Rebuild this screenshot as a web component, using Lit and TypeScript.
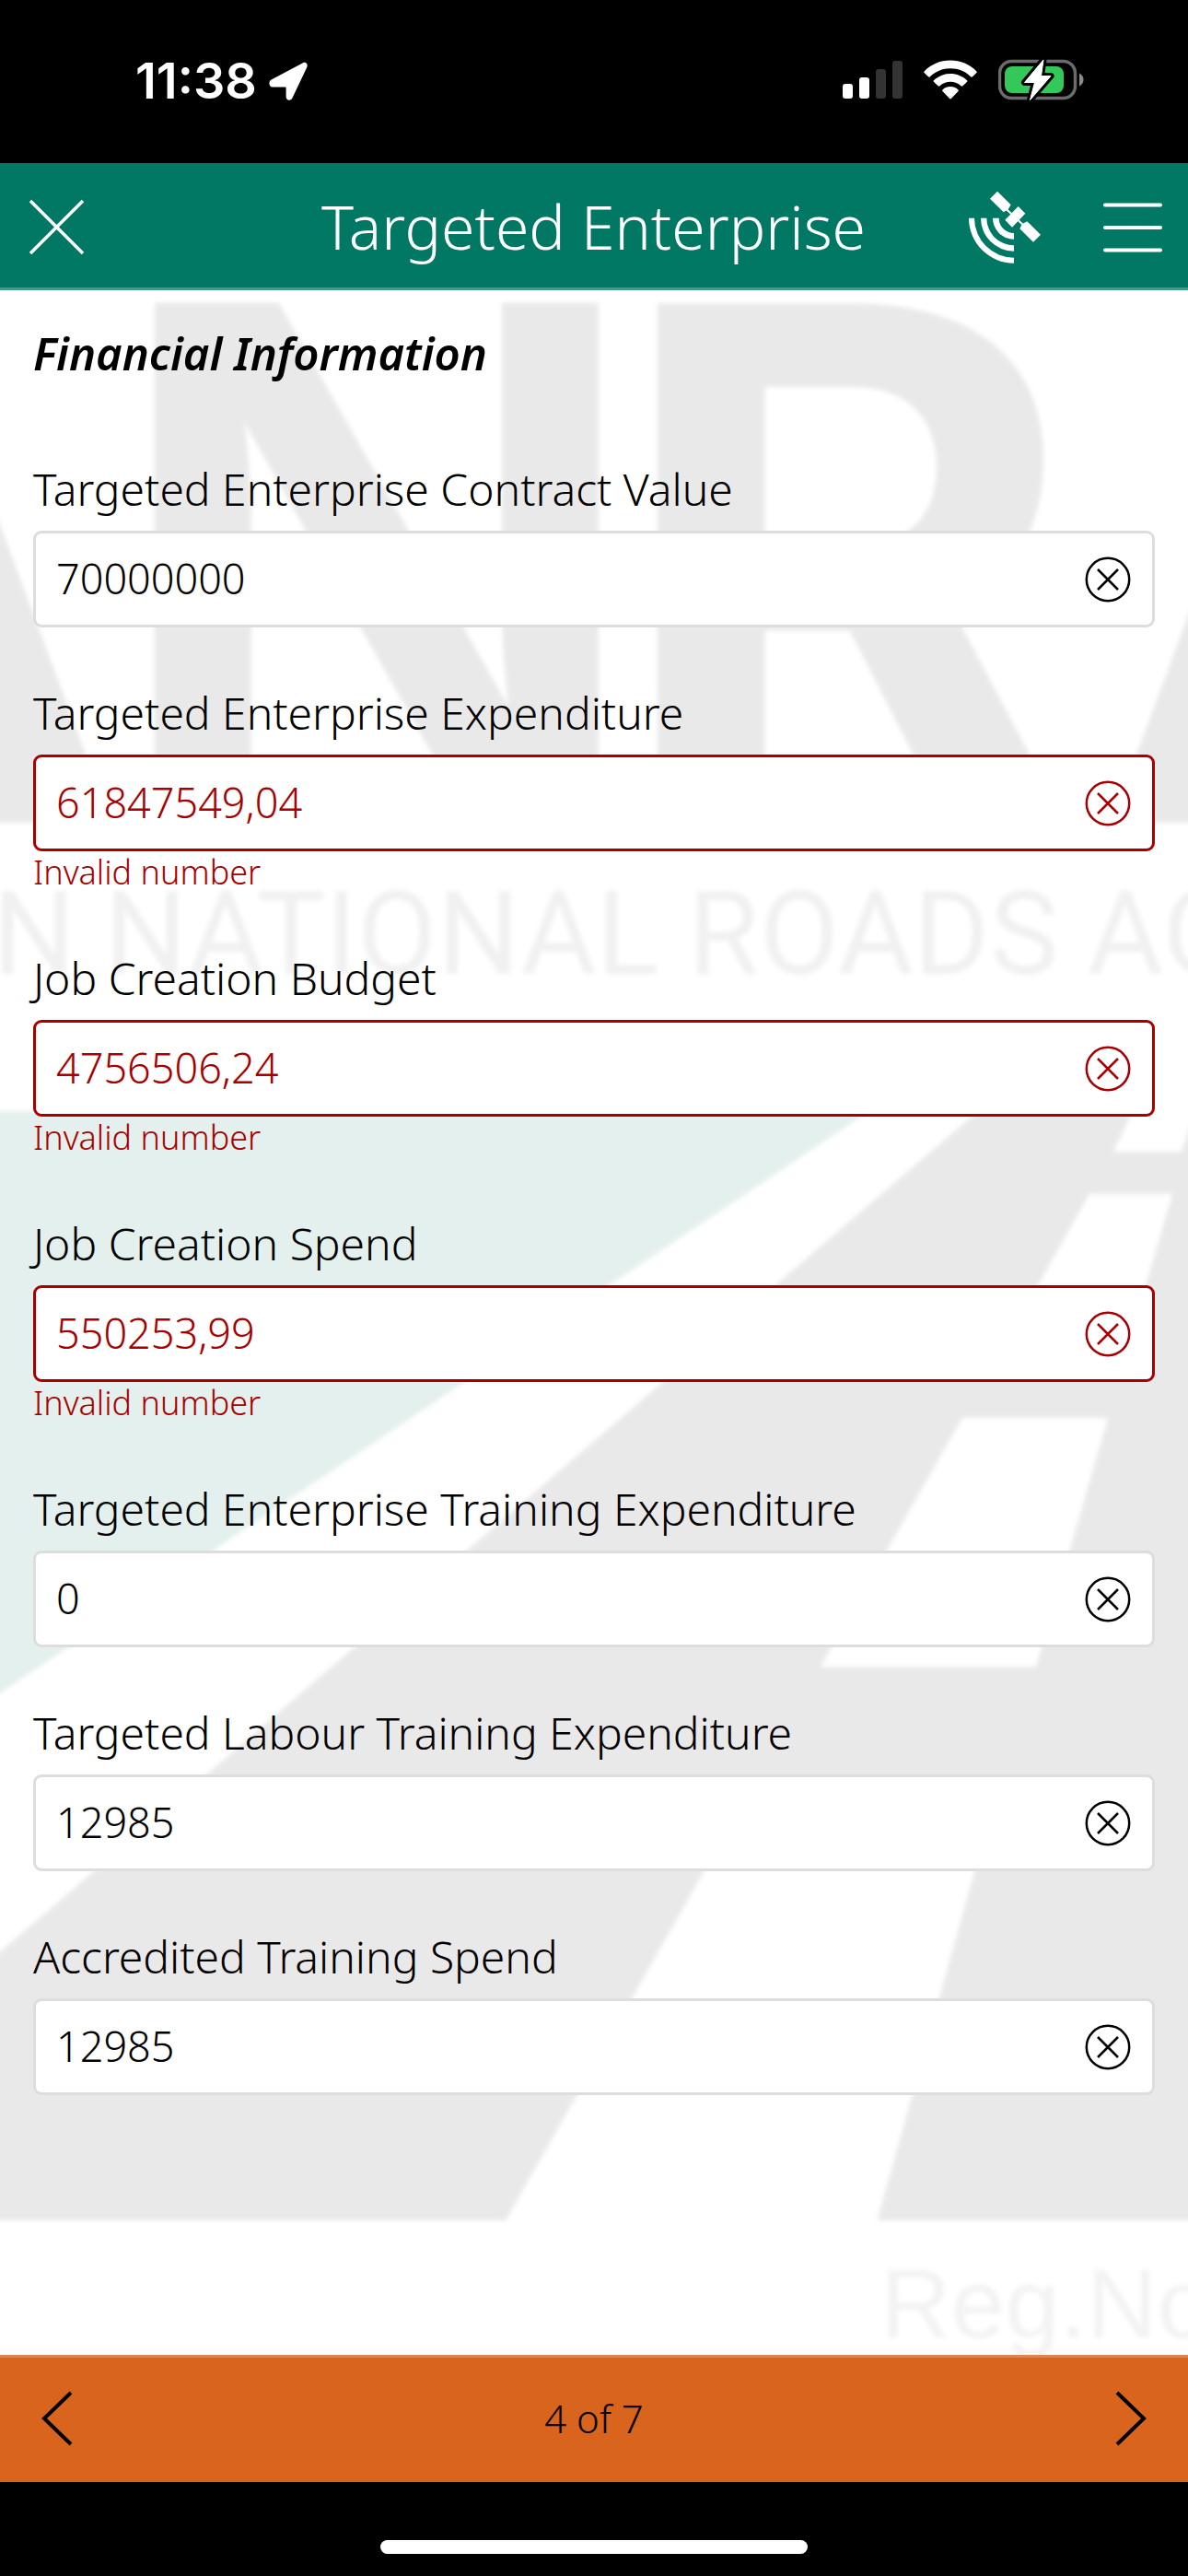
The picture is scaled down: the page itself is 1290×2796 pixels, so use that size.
import { LitElement, html, svg, css, nothing } from "lit";
import { customElement, property, state } from "lit/decorators.js";
import { classMap } from "lit/directives/class-map.js";

interface FieldData {
  id: string;
  label: string;
  value: string;
}

@customElement("status-bar")
class StatusBar extends LitElement {
  static styles = css`
    :host {
      display: block;
      background: #000;
      color: #fff;
    }
    .bar {
      box-sizing: border-box;
      min-height: 177px;
      padding: 0 112px 0 147px;
      display: flex;
      align-items: flex-start;
      justify-content: space-between;
    }
    .group {
      height: 60px;
      margin-top: 57px;
      display: flex;
      align-items: center;
    }
    .clock {
      margin-top: 58px;
      gap: 13px;
      font: 600 54px/60px Inter, "Liberation Sans", sans-serif;
    }
    .system {
      gap: 23px;
    }
    svg {
      display: block;
    }
  `;

  render() {
    return html`
      <div class="bar">
        <div class="group clock">
          <time>11:38</time>
          <svg width="42" height="42" viewBox="0 0 42 42" aria-hidden="true">
            <path fill="#fff" d="M37 1.2 2.6 19.4C-.9 21.4-.1 27.6 4 27.6H17.600c.8 0 1 .4 1 1V38c0 4.300 5.500 5 7 1L41.300 6C42.600 2.500 40.300-.3 37 1.200Z" />
          </svg>
        </div>
        <div class="group system">
          <svg width="65" height="44" viewBox="0 0 65 44" aria-hidden="true">
            <rect x="0" y="26" width="11" height="16" rx="3" fill="#fff" />
            <rect x="18" y="19" width="11" height="23" rx="3" fill="#fff" />
            <rect x="36" y="10" width="11" height="32" rx="3" fill="#333" />
            <rect x="54" y="1" width="11" height="41" rx="3" fill="#333" />
          </svg>
          <svg width="58" height="44" viewBox="0 0 58 44" aria-hidden="true">
            <g fill="#fff">
              <path d="M29 0.500C18 .5 8 4.800.800 12.200c-.7.700-.7 1.400 0 2l4.200 4c.6.600 1.300.6 1.900 0C12.800 12.500 20.500 9.300 29 9.300s16.200 3.200 22.100 8.900c.6.600 1.300.6 1.900 0l4.200-4c.7-.6.7-1.300 0-2C50 4.800 40 .5 29 .5Z" />
              <path d="M29 15c-6.900 0-13.200 2.700-17.900 7-.7.700-.7 1.300 0 2l4.500 4.300c.6.600 1.200.6 1.900 0 3-2.800 7-4.500 11.500-4.500s8.500 1.700 11.500 4.500c.7.600 1.300.6 1.900 0L46.900 24c.7-.7.7-1.300 0-2-4.700-4.300-11-7-17.900-7Z" />
              <path d="M29 29c-3.200 0-6.100 1.200-8.300 3.200-.7.700-.7 1.300 0 2l7.200 7.600c.7.700 1.500.7 2.200 0l7.200-7.600c.7-.7.7-1.300 0-2C35.100 30.200 32.200 29 29 29Z" />
            </g>
          </svg>
          <svg width="94" height="46" viewBox="0 0 94 46" aria-hidden="true">
            <rect x="1.500" y="2.500" width="82" height="40" rx="13" fill="none" stroke="#6b6b6b" stroke-width="3.500" />
            <path d="M88 15.500c6 2.500 6 11.500 0 14Z" fill="#8a8a8a" />
            <rect x="7" y="8" width="64" height="29" rx="8" fill="#34c759" />
            <path
              d="M49 1 28.500 25.500H39.500L34.500 44.500 57 18.500H46.500Z"
              fill="#fff" stroke="#000" stroke-width="7" stroke-linejoin="round" paint-order="stroke"
            />
            <path d="M49 1 28.500 25.500H39.500L34.500 44.500 57 18.500H46.500Z" fill="#fff" stroke="#fff" stroke-width="1" stroke-linejoin="round" />
          </svg>
        </div>
      </div>
    `;
  }
}

@customElement("page-watermark")
class PageWatermark extends LitElement {
  static styles = css`
    :host {
      display: block;
    }
    .art {
      display: block;
      width: 100%;
      height: 100%;
    }
    .wordmark {
      font: 700 793px Roboto, sans-serif;
      fill: #e9e9e9;
    }
    .wordmark.narrow {
      font: 700 820px "Liberation Sans", sans-serif;
    }
    .agency {
      font: 400 126px Roboto, sans-serif;
      fill: #f1f1f1;
    }
    .registration {
      font: 400 106px "Liberation Sans", sans-serif;
      fill: #f3f3f3;
    }
  `;

  render() {
    return html`
      <svg class="art" viewBox="0 315 1290 2241" preserveAspectRatio="xMidYMin slice" aria-hidden="true">
        ${svg`
          <defs>
            <filter id="soft" x="-5%" y="-5%" width="110%" height="110%">
              <feGaussianBlur stdDeviation="2.500" />
            </filter>
          </defs>
          <g filter="url(#soft)">
            <text class="wordmark" x="-410" y="893">A</text>
            <text class="wordmark narrow" x="113" y="893">N</text>
            <text class="wordmark" x="664" y="893">R</text>
            <text class="wordmark" x="1204" y="893">A</text>
            <text class="agency" x="-8" y="1057">N NATIONAL ROADS AG</text>
            <polygon fill="#e4f0ed" points="-20,1206 944,1206 -20,1851" />
            <polygon fill="#e9e9e9" points="1062,1206 1310,1206 1310,2410 -20,2410 -20,2136" />
            <polygon fill="#fff" points="1233,1200 1300,1200 1283,1250 1209,1250" />
            <polygon fill="#fff" points="1183,1296 1273,1296 1228,1450 1096,1450" />
            <polygon fill="#fff" points="1045,1539 1203,1539 1125,1809 891,1809" />
            <polygon fill="#fff" points="805,1960 1078,1960 952,2412 548,2412" />
            <text class="registration" x="956" y="2537">Reg.No</text>
          </g>
        `}
      </svg>
    `;
  }
}

@customElement("number-field")
class NumberField extends LitElement {
  static styles = css`
    :host {
      display: block;
    }
    .label {
      display: block;
      margin-bottom: 15px;
      padding-top: 1px;
      font-size: 48px;
      line-height: 60px;
      color: #000;
    }
    .box {
      box-sizing: border-box;
      height: 105px;
      display: flex;
      align-items: center;
      border: 3px solid #ddd;
      border-radius: 9px;
      background: #fff;
      color: #000;
    }
    .box.invalid {
      border-color: #a80000;
      color: #a80000;
    }
    .input {
      flex: 1;
      min-width: 0;
      box-sizing: border-box;
      height: 100%;
      margin: 0;
      padding: 0 0 3px 22px;
      border: 0;
      outline: 0;
      background: none;
      font: inherit;
      font-size: 45px;
      color: inherit;
    }
    .clear {
      flex: none;
      margin: 0;
      padding: 1px 23px 0;
      height: 100%;
      border: 0;
      background: none;
      color: inherit;
    }
    .clear svg {
      display: block;
    }
    .error {
      margin: 0;
      font-size: 36px;
      line-height: 45px;
      color: #a80000;
    }
  `;

  @property() label = "";
  @property() value = "";

  private get invalid() {
    return !/^\d*(\.\d+)?$/.test(this.value);
  }

  private onInput(e: Event) {
    this.value = (e.target as HTMLInputElement).value;
  }

  private clear() {
    this.value = "";
  }

  render() {
    return html`
      <label class="label" for="value">${this.label}</label>
      <div class=${classMap({ box: true, invalid: this.invalid })}>
        <input
          class="input"
          id="value"
          type="text"
          inputmode="decimal"
          .value=${this.value}
          aria-invalid=${this.invalid ? "true" : "false"}
          @input=${this.onInput}
        />
        <button class="clear" type="button" aria-label="Clear" @click=${this.clear}>
          <svg width="50" height="50" viewBox="0 0 50 50" fill="none" stroke="currentColor" stroke-width="2.500">
            <circle cx="25" cy="25" r="23.200" />
            <path d="M14 14 36 36M36 14 14 36" />
          </svg>
        </button>
      </div>
      ${this.invalid ? html`<p class="error">Invalid number</p>` : nothing}
    `;
  }
}

@customElement("app-root")
class AppRoot extends LitElement {
  static styles = css`
    :host {
      display: flex;
      flex-direction: column;
      min-height: 100vh;
      background: #000;
      font-family: "Noto Sans", "Open Sans", sans-serif;
      font-weight: 300;
      color: #000;
    }
    .header {
      box-sizing: border-box;
      height: 138px;
      padding: 4px 22px 0 21px;
      display: grid;
      grid-template-columns: 1fr auto 1fr;
      align-items: center;
      background: #007863;
      border-bottom: 3px solid #409a8a;
      color: #fff;
    }
    .title {
      margin: 0;
      padding-bottom: 4px;
      font-size: 66px;
      line-height: 80px;
      font-weight: 300;
    }
    .actions {
      display: flex;
      align-items: center;
      justify-content: flex-end;
      gap: 62px;
    }
    .icon {
      margin: 0;
      padding: 0;
      border: 0;
      background: none;
      color: inherit;
    }
    .icon svg {
      display: block;
    }
    .close {
      justify-self: start;
    }
    .main {
      flex: 1;
      position: relative;
      overflow: hidden;
      background: #fff;
    }
    .watermark {
      position: absolute;
      inset: 0;
    }
    .form {
      position: relative;
      padding: 38px 36px 62px;
      display: flex;
      flex-direction: column;
      gap: 62px;
    }
    .heading {
      margin: 0 0 25px;
      font-size: 49px;
      line-height: 60px;
      font-weight: 600;
      font-style: italic;
    }
    .footer {
      box-sizing: border-box;
      height: 138px;
      padding: 0 36px 3px;
      display: flex;
      align-items: center;
      justify-content: space-between;
      background: #d9641e;
      border-top: 3px solid #de8651;
    }
    .page {
      font-size: 42px;
      line-height: 60px;
    }
    .home {
      box-sizing: border-box;
      height: 102px;
      padding-top: 63px;
    }
    .home-bar {
      width: 36%;
      height: 15px;
      margin: 0 auto;
      border-radius: 8px;
      background: #fff;
    }
  `;

  @state() private fields: FieldData[] = [
    { id: "contract", label: "Targeted Enterprise Contract Value", value: "70000000" },
    { id: "expenditure", label: "Targeted Enterprise Expenditure", value: "61847549,04" },
    { id: "budget", label: "Job Creation Budget", value: "4756506,24" },
    { id: "spend", label: "Job Creation Spend", value: "550253,99" },
    { id: "training", label: "Targeted Enterprise Training Expenditure", value: "0" },
    { id: "labour", label: "Targeted Labour Training Expenditure", value: "12985" },
    { id: "accredited", label: "Accredited Training Spend", value: "12985" },
  ];

  render() {
    return html`
      <status-bar></status-bar>
      <header class="header">
        <button class="icon close" type="button" aria-label="Close">
          <svg width="82" height="82" viewBox="0 0 82 82" stroke="currentColor" stroke-width="3.500" fill="none">
            <path d="M12 12 69 69M69 12 12 69" />
          </svg>
        </button>
        <h1 class="title">Targeted Enterprise</h1>
        <div class="actions">
          <button class="icon" type="button" aria-label="Location status">
            <svg width="78" height="106" viewBox="159 40 234 318" fill="currentColor">
              <path d="M159 168H177A129 129 0 0 0 306 297V315A147 147 0 0 1 159 168Z" />
              <path d="M198 168H217A89 89 0 0 0 306 257V276A108 108 0 0 1 198 168Z" />
              <path d="M237 168H257A49 49 0 0 0 306 217V237A69 69 0 0 1 237 168Z" />
              <path d="M252 81 296 125 287 140 272 149 228 105Z" />
              <path d="M320 130 343 153 300 198 277 174Z" />
              <path d="M349 179 393 222 369 246 325 203 332 188Z" />
              <path d="M282 140 338 192" stroke="currentColor" stroke-width="6" fill="none" />
            </svg>
          </button>
          <button class="icon" type="button" aria-label="Menu">
            <svg width="76" height="76" viewBox="0 0 76 76" stroke="currentColor" stroke-width="4" stroke-linecap="round" fill="none">
              <path d="M8 13.500H68M8 38H68M8 62.500H68" />
            </svg>
          </button>
        </div>
      </header>
      <main class="main">
        <page-watermark class="watermark"></page-watermark>
        <form class="form">
          <h2 class="heading">Financial Information</h2>
          ${this.fields.map(
            (f) => html`<number-field .label=${f.label} .value=${f.value}></number-field>`
          )}
        </form>
      </main>
      <nav class="footer" aria-label="Pages">
        <button class="icon" type="button" aria-label="Previous page">
          <svg width="52" height="64" viewBox="0 0 52 64" stroke="currentColor" stroke-width="4" fill="none">
            <path d="M41 4 12 32 41 60" />
          </svg>
        </button>
        <span class="page">4 of 7</span>
        <button class="icon" type="button" aria-label="Next page">
          <svg width="52" height="64" viewBox="0 0 52 64" stroke="currentColor" stroke-width="4" fill="none">
            <path d="M11 4 40 32 11 60" />
          </svg>
        </button>
      </nav>
      <div class="home"><div class="home-bar"></div></div>
    `;
  }
}
